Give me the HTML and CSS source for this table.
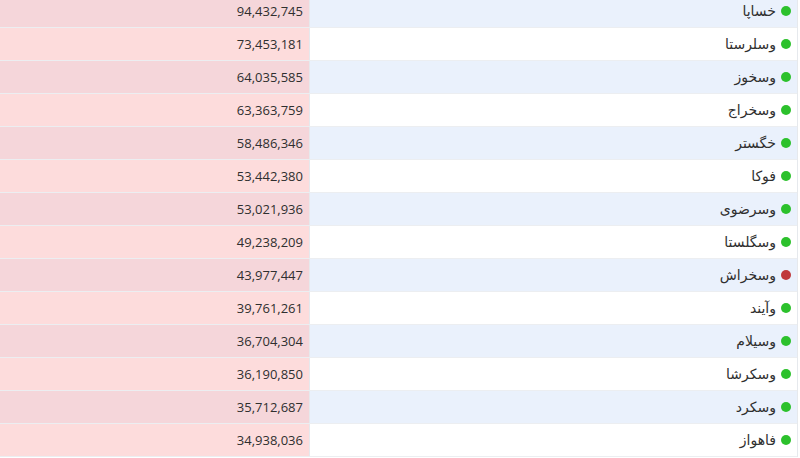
FILE: index.html
```html
<!DOCTYPE html>
<html lang="fa">
<head>
<meta charset="utf-8">
<link rel="stylesheet" href="styles.css">
</head>
<body>
<div class="table">
  <div class="row"><div class="val">94,432,745</div><div class="name"><span class="dot up"></span><span class="sym">خساپا</span></div></div>
  <div class="row"><div class="val">73,453,181</div><div class="name"><span class="dot up"></span><span class="sym">وسلرستا</span></div></div>
  <div class="row"><div class="val">64,035,585</div><div class="name"><span class="dot up"></span><span class="sym">وسخوز</span></div></div>
  <div class="row"><div class="val">63,363,759</div><div class="name"><span class="dot up"></span><span class="sym">وسخراج</span></div></div>
  <div class="row"><div class="val">58,486,346</div><div class="name"><span class="dot up"></span><span class="sym">خگستر</span></div></div>
  <div class="row"><div class="val">53,442,380</div><div class="name"><span class="dot up"></span><span class="sym">فوکا</span></div></div>
  <div class="row"><div class="val">53,021,936</div><div class="name"><span class="dot up"></span><span class="sym">وسرضوی</span></div></div>
  <div class="row"><div class="val">49,238,209</div><div class="name"><span class="dot up"></span><span class="sym">وسگلستا</span></div></div>
  <div class="row"><div class="val">43,977,447</div><div class="name"><span class="dot down"></span><span class="sym">وسخراش</span></div></div>
  <div class="row"><div class="val">39,761,261</div><div class="name"><span class="dot up"></span><span class="sym">وآیند</span></div></div>
  <div class="row"><div class="val">36,704,304</div><div class="name"><span class="dot up"></span><span class="sym">وسیلام</span></div></div>
  <div class="row"><div class="val">36,190,850</div><div class="name"><span class="dot up"></span><span class="sym">وسکرشا</span></div></div>
  <div class="row"><div class="val">35,712,687</div><div class="name"><span class="dot up"></span><span class="sym">وسکرد</span></div></div>
  <div class="row"><div class="val">34,938,036</div><div class="name"><span class="dot up"></span><span class="sym">فاهواز</span></div></div>
</div>
</body>
</html>
```
FILE: styles.css
```css
html, body {
  margin: 0;
  padding: 0;
  background: #ffffff;
}
body {
  font-family: "Open Sans", "DejaVu Sans", sans-serif;
  font-size: 13px;
  color: #333;
  overflow: hidden;
}
.table {
  width: 797px;
  margin-top: -5px;
  border-right: 1px solid #e6e9ed;
}
.row {
  display: grid;
  grid-template-columns: 310px 1fr;
  height: 32px;
  border-bottom: 1px solid #eceef1;
}
.val {
  display: flex;
  align-items: center;
  justify-content: flex-end;
  padding-right: 6px;
  background: #f5d6da;
  border-right: 1px solid #e6e9ed;
  color: #2f2f2f;
}
.row:nth-child(even) .val {
  background: #fddcdc;
}
.name {
  display: flex;
  align-items: center;
  justify-content: flex-start;
  flex-direction: row-reverse;
  gap: 5px;
  padding-right: 6px;
  background: #eaf1fc;
  direction: ltr;
}
.row:nth-child(even) .name {
  background: #ffffff;
}
.sym {
  font-family: "DejaVu Sans", sans-serif;
  font-size: 14px;
  color: #2f2f2f;
  direction: rtl;
}
.dot {
  width: 10px;
  height: 10px;
  border-radius: 50%;
  flex: none;
}
.dot.up {
  background: #2cc12c;
}
.dot.down {
  background: #c0383b;
}
```
